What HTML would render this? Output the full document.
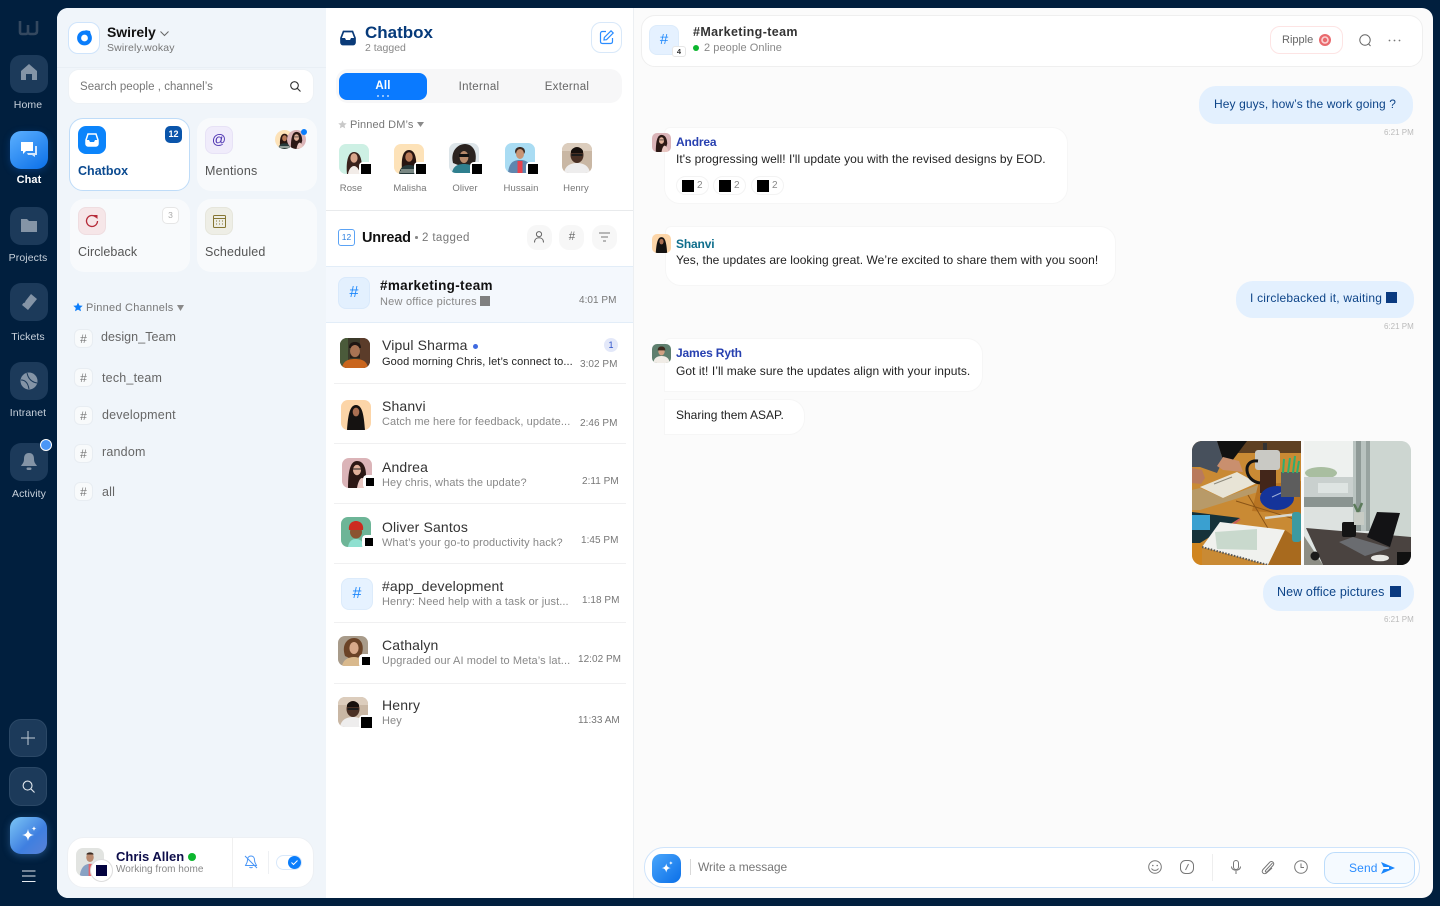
<!DOCTYPE html>
<html><head><meta charset="utf-8"><title>Chatbox</title>
<style>
*{box-sizing:border-box}
html,body{margin:0;padding:0;width:1440px;height:906px;overflow:hidden;background:#011f3e;font-family:"Liberation Sans",sans-serif}
#p{position:absolute;left:0;top:0;width:1440px;height:906px;background:#011f3e}
.a{position:absolute}
.t{position:absolute;line-height:16px;height:16px;white-space:nowrap;letter-spacing:.15px}
.c{transform:translateX(-50%)}
svg{position:absolute;overflow:visible}
.rail{position:absolute;left:10px;width:38px;height:38px;border-radius:11px;background:#1c3a5a}
.rl{color:#c9d2dc;font-size:10.5px;letter-spacing:.1px}
.card{position:absolute;width:121px;height:73px;border-radius:14px;background:#f8fafc}
.ic{position:absolute;width:28px;height:28px;border-radius:8px}
.ch{position:absolute;left:74px;width:19px;height:19px;border-radius:6px;background:#f8fafb;border:1px solid #e8edf2;color:#777;font-size:12px;text-align:center;line-height:18px}
.cn{color:#666;font-size:12.5px;letter-spacing:.2px}
.nm{color:#333;font-size:14px;letter-spacing:.15px}
.sb{color:#888;font-size:11px;letter-spacing:.1px}
.tm{color:#777;font-size:10px;letter-spacing:.03px}
.ln{position:absolute;left:334px;width:292px;height:1px;background:#f0f0f1}
.av{position:absolute;border-radius:7px;overflow:hidden;width:30px;height:30px}
.av svg{left:0;top:0;width:100%;height:100%}
.sq{position:absolute;width:14px;height:14px;background:#fff;border-radius:4px}
.sq i{position:absolute;left:2px;top:2px;width:10px;height:10px;background:#000}
.bub{position:absolute;background:#fff;border-radius:16px;border:1px solid #f6f6f6}
.me{position:absolute;background:#e3f0fe;border-radius:17px}
.mt{color:#0d4488;font-size:12px;letter-spacing:.11px}
.tx{color:#222;font-size:12px;letter-spacing:.06px}
.st{color:#bbb;font-size:8px;letter-spacing:0}
.who{font-size:12px;letter-spacing:-.15px;font-weight:bold}
.rx{position:absolute;top:176px;width:33px;height:19px;border:1px solid #f3f3f3;border-radius:10px;background:#fff}
.rx i{position:absolute;left:5px;top:3px;width:12px;height:12px;background:#000}
.rx b{position:absolute;left:20px;top:2px;font-weight:normal;color:#888;font-size:10px;line-height:14px}
.rb{position:absolute;top:225px;width:25px;height:25px;border-radius:10px;background:#f7f7f7}
.dm{font-size:9.5px;color:#777;letter-spacing:.08px}
</style></head><body>
<svg width="0" height="0" style="position:absolute">
<defs>
<symbol id="rose" viewBox="0 0 30 30"><rect width="30" height="30" fill="#cdf0e4"/><path d="M8 30c-1-9 0-22 7-22s9 10 7 22z" fill="#3a221c"/><ellipse cx="15" cy="14" rx="3.6" ry="4.8" fill="#d9a68c"/><path d="M9 30c1-6 4-8 6-8s5 2 6 8z" fill="#f2ece8"/></symbol>
<symbol id="malisha" viewBox="0 0 30 30"><rect width="30" height="30" fill="#fde2b8"/><path d="M8 26c-1-12 1-20 7-20s8 8 7 20z" fill="#281510"/><ellipse cx="15" cy="13" rx="3.7" ry="4.8" fill="#b97a57"/><path d="M5 30c1-7 5-9 10-9s9 2 10 9z" fill="#26393a"/><path d="M7 26h16M6 28h18" stroke="#cfd8cf"/></symbol>
<symbol id="oliver" viewBox="0 0 30 30"><rect width="30" height="30" fill="#dde5e9"/><path d="M4 20C1 8 9 1 16 1s13 7 10 19l-5 2H9z" fill="#2b2320"/><ellipse cx="15" cy="14" rx="4.4" ry="6" fill="#b98a6b"/><rect x="10" y="11" width="10" height="3" fill="#111"/><path d="M3 30c1-7 6-9 12-9s11 2 12 9z" fill="#2f7f8e"/></symbol>
<symbol id="hussain" viewBox="0 0 30 30"><rect width="30" height="30" fill="#a9dcf3"/><path d="M10 9c0-4 3-5 5-5s5 1 5 5l-1 2h-8z" fill="#3b2a22"/><ellipse cx="15" cy="11" rx="4" ry="5" fill="#c89474"/><path d="M3 30c1-10 5-13 12-13s11 3 12 13z" fill="#5f86ae"/><rect x="12.500" y="18" width="5" height="12" fill="#e8434e"/></symbol>
<symbol id="henry" viewBox="0 0 30 30"><rect width="30" height="30" fill="#c9b7a4"/><rect width="30" height="8" fill="#dccdbd"/><ellipse cx="15" cy="12" rx="6.500" ry="8" fill="#4a3024"/><path d="M9 8c2-5 10-5 12 0v2H9z" fill="#17100d"/><rect x="9.500" y="11" width="11" height="2" fill="#1c1c1c"/><path d="M2 30c1-7 6-10 13-10s12 3 13 10z" fill="#eeeded"/></symbol>
<symbol id="vipul" viewBox="0 0 30 30"><rect width="30" height="30" fill="#3b3a2a"/><rect x="20" width="10" height="30" fill="#5b3c2a"/><rect width="8" height="30" fill="#4a5a3a"/><path d="M9 10c0-5 3-6 6-6s6 1 6 6z" fill="#1e1613"/><ellipse cx="15" cy="13" rx="5" ry="6" fill="#a87353"/><path d="M10 15c2 6 8 6 10 0v5h-10z" fill="#2b1d16"/><path d="M2 30c1-7 6-9 13-9s12 2 13 9z" fill="#c9651d"/></symbol>
<symbol id="shanvi" viewBox="0 0 30 30"><rect width="30" height="30" fill="#fcd5a8"/><path d="M6 30C7 18 8 5 15 5s8 13 9 25z" fill="#151211"/><ellipse cx="15" cy="12" rx="3.300" ry="4.400" fill="#a96f52"/></symbol>
<symbol id="andrea" viewBox="0 0 30 30"><rect width="30" height="30" fill="#dbb4b8"/><path d="M6 30C6 14 8 3 15 3s9 8 9 14l-4 13z" fill="#2c1815"/><ellipse cx="15" cy="12" rx="4" ry="5.200" fill="#e0b09a"/><path d="M15 30c1-6 3-10 5-10s5 4 6 10z" fill="#e9c7c2"/><path d="M11 11h8" stroke="#222"/></symbol>
<symbol id="osantos" viewBox="0 0 30 30"><rect width="30" height="30" fill="#6db597"/><path d="M7 30c1-6 4-8 8-8s7 2 8 8z" fill="#8fe0d0"/><ellipse cx="15" cy="15" rx="6" ry="6.500" fill="#8a5430"/><path d="M8 13c-1-6 3-9 7-9s8 3 7 9z" fill="#cc2b20"/></symbol>
<symbol id="cathalyn" viewBox="0 0 30 30"><rect width="30" height="30" fill="#a89b8a"/><path d="M7 20C3 8 10 2 16 2c8 0 11 9 7 18l-8 4z" fill="#6b4327"/><ellipse cx="16" cy="12" rx="4.600" ry="6" fill="#d8a98a"/><path d="M4 30c1-6 6-9 12-9s9 3 10 9z" fill="#d9b98d"/></symbol>
<symbol id="chris" viewBox="0 0 30 30"><rect width="30" height="30" fill="#e2e4e1"/><ellipse cx="15" cy="10" rx="4" ry="5" fill="#b98a6f"/><path d="M11 7c1-3 7-3 8 0z" fill="#3a2a22"/><path d="M4 30c1-9 5-13 11-13s10 4 11 13z" fill="#88a2c4"/><rect x="13.500" y="17" width="3.500" height="13" fill="#e3656b"/></symbol>
<symbol id="james" viewBox="0 0 30 30"><rect width="30" height="30" fill="#5e7f6e"/><ellipse cx="15" cy="12" rx="5" ry="6" fill="#d2a284"/><path d="M9 10c0-5 3-6 6-6s6 1 6 6z" fill="#3d2a1e"/><path d="M2 30c1-8 6-11 13-11s12 3 13 11z" fill="#f0ece6"/></symbol>
</defs></svg>

<div id="p">
 <!-- main panel -->
 <div class="a" style="left:57px;top:8px;width:1376px;height:890px;border-radius:11px;overflow:hidden;background:#fbfbfb">
  <div class="a" style="left:0;top:0;width:269px;height:890px;background:#f0f5fa"></div>
  <div class="a" style="left:269px;top:0;width:308px;height:890px;background:#fff;border-right:1px solid #eceff2"></div>
  <div class="a" style="left:0;top:59px;width:269px;height:1px;background:#e9eff5"></div>
 </div>

 <!-- rail -->
 <svg style="left:19px;top:20px" width="20" height="15" viewBox="0 0 20 15"><path d="M1 1v11c0 2 1 2 2 2h4c1 0 2-1 2-2V5v7c0 1 1 2 2 2h4c2 0 3-1 3-3V1" fill="none" stroke="#34485f" stroke-width="2.600"/></svg>
 <div class="rail" style="top:55px"></div>
 <svg style="left:20px;top:63px" width="18" height="18" viewBox="0 0 18 18"><path d="M9 1 1 8v9h5v-6h6v6h5V8z" fill="#8494a6"/></svg>
 <div class="t rl c" style="left:28px;top:97px">Home</div>
 <div class="rail" style="top:131px;background:linear-gradient(145deg,#5cb0ff,#0a6fe8);box-shadow:0 2px 8px rgba(20,110,230,.3)"></div>
 <svg style="left:20px;top:141px" width="18" height="18" viewBox="0 0 18 18"><path d="M1 1h12v9H6l-3 3v-3H1z" fill="#fff"/><path d="M15 5h2v9h-2v2l-3-2H8l-1-2h8z" fill="#d5e8fd"/></svg>
 <div class="t c" style="left:29px;top:172px;color:#fff;font-size:11px;font-weight:bold;letter-spacing:.1px">Chat</div>
 <div class="rail" style="top:207px"></div>
 <svg style="left:20px;top:217px" width="18" height="16" viewBox="0 0 18 16"><path d="M1 2h6l2 2h8v11H1z" fill="#8494a6"/></svg>
 <div class="t rl c" style="left:28px;top:250px">Projects</div>
 <div class="rail" style="top:283px"></div>
 <svg style="left:19px;top:292px" width="20" height="20" viewBox="0 0 20 20"><path d="M12 2l6 5-9 11-6-5 1.500-2 1.500-.5.500-1.500z" fill="#8494a6"/></svg>
 <div class="t rl c" style="left:28px;top:329px">Tickets</div>
 <div class="rail" style="top:362px"></div>
 <svg style="left:20px;top:372px" width="18" height="18" viewBox="0 0 18 18"><circle cx="9" cy="9" r="8.500" fill="#8494a6"/><path d="M7 1c1 5 4 9 10 10M1 8c4 0 7 3 8 9" fill="none" stroke="#1c3a5a" stroke-width="1"/></svg>
 <div class="t rl c" style="left:28px;top:405px">Intranet</div>
 <div class="rail" style="top:443px"></div>
 <svg style="left:21px;top:452px" width="16" height="20" viewBox="0 0 16 20"><path d="M8 1c4 0 5 3 5 6 0 4 2 5 3 7H0c1-2 3-3 3-7 0-3 1-6 5-6z" fill="#8494a6"/><rect x="5.500" y="15.500" width="5" height="2.500" rx="1.200" fill="#8494a6"/></svg>
 <div class="a" style="left:40px;top:439px;width:12px;height:12px;border-radius:50%;background:#4a96f6;border:1.500px solid #fff"></div>
 <div class="t rl c" style="left:29px;top:486px">Activity</div>

 <div class="rail" style="left:9px;top:719px;background:#1c3a5a;border:1px solid #2b4866;border-radius:12px"></div>
 <svg style="left:21px;top:731px" width="14" height="14"><path d="M7 0v14M0 7h14" stroke="#c5ced8" stroke-width="1"/></svg>
 <div class="rail" style="left:9px;top:767px;height:39px;background:#1c3a5a;border:1px solid #2b4866;border-radius:12px"></div>
 <svg style="left:22px;top:780px" width="13" height="13" viewBox="0 0 14 14"><circle cx="6" cy="6" r="4.800" fill="none" stroke="#dfe5eb" stroke-width="1.200"/><path d="M9.500 9.500 13.500 13.500" stroke="#dfe5eb" stroke-width="1.200"/></svg>
 <div class="rail" style="left:10px;top:817px;height:37px;width:37px;background:linear-gradient(135deg,#7cc6f6,#3f7fe0 60%,#5a82d6);box-shadow:0 2px 8px rgba(90,160,240,.35)"></div>
 <svg style="left:20px;top:826px" width="18" height="18" viewBox="0 0 18 18"><path d="M8 3c.7 4 2 5.300 6 6-4 .7-5.300 2-6 6-.7-4-2-5.300-6-6 4-.7 5.300-2 6-6z" fill="#fff"/><path d="M14 0c.3 1.700.9 2.300 2.500 2.500C14.900 2.800 14.300 3.400 14 5c-.3-1.600-.9-2.200-2.500-2.500C13.100 2.300 13.700 1.700 14 0z" fill="#fff"/></svg>
 <svg style="left:22px;top:870px" width="14" height="13"><path d="M0 1h13.500M0 6h13.500M0 11.500h13.500" stroke="#e6ebf0" stroke-width="1"/></svg>

 <!-- sidebar head -->
 <div class="a" style="left:68px;top:22px;width:32px;height:32px;background:#fff;border:1px solid #cfe4fb;border-radius:10px"></div>
 <svg style="left:76px;top:29px" width="17" height="17" viewBox="0 0 17 17"><circle cx="8.500" cy="9" r="5.400" fill="none" stroke="#0a7dfb" stroke-width="4"/><path d="M9 1l5 1 1 4z" fill="#0a7dfb"/></svg>
 <div class="t" style="left:107px;top:24px;font-size:14px;font-weight:bold;color:#111;letter-spacing:-.05px">Swirely</div>
 <svg style="left:160px;top:31px" width="9" height="6"><path d="M.5.500 4.500 4.500 8.500.5" fill="none" stroke="#666"/></svg>
 <div class="t" style="left:107px;top:40px;font-size:10.500px;color:#777;letter-spacing:.15px">Swirely.wokay</div>
 <div class="a" style="left:68px;top:69px;width:246px;height:35px;background:#fff;border-radius:11px;border:1px solid #eef2f6"></div>
 <div class="t" style="left:80px;top:79px;font-size:11.500px;color:#777;letter-spacing:.03px">Search people , channel’s</div>
 <svg style="left:290px;top:81px" width="11" height="11" viewBox="0 0 11 11"><circle cx="4.500" cy="4.500" r="3.800" fill="none" stroke="#333" stroke-width="1.100"/><path d="M7.300 7.300 10.500 10.500" stroke="#333" stroke-width="1.100"/></svg>

 <!-- cards -->
 <div class="card" style="left:69px;top:118px;background:#fff;border:1px solid #bfdcf8"></div>
 <div class="ic" style="left:78px;top:126px;background:#0b84fb"></div>
 <svg style="left:85px;top:133px" width="14" height="14" viewBox="0 0 14 14"><path d="M3 1h8l2 6v4c0 1-1 2-2 2H3c-1 0-2-1-2-2V7z" fill="none" stroke="#fff" stroke-width="1.500"/><path d="M1 7h3l1 2h4l1-2h3v4c0 1-1 2-2 2H3c-1 0-2-1-2-2z" fill="#fff"/></svg>
 <div class="t" style="left:78px;top:163px;font-size:12.500px;font-weight:bold;color:#0b4a90;letter-spacing:.02px">Chatbox</div>
 <div class="a" style="left:165px;top:126px;width:17px;height:17px;border-radius:5px;background:#0a55ab;color:#fff;font-size:9px;text-align:center;line-height:17px;font-weight:bold">12</div>

 <div class="card" style="left:197px;top:118px;width:120px"></div>
 <div class="ic" style="left:205px;top:126px;background:#f0ecfb;border:1px solid #e7e2f6"></div>
 <div class="t c" style="left:219px;top:131px;font-size:14px;color:#4a2fb0;letter-spacing:0">@</div>
 <div class="av" style="left:275px;top:130px;width:19px;height:19px;border-radius:50%"><svg viewBox="0 0 30 30"><use href="#malisha"/></svg></div>
 <div class="av" style="left:287px;top:130px;width:19px;height:19px;border-radius:50%"><svg viewBox="0 0 30 30"><use href="#andrea"/></svg></div>
 <div class="a" style="left:301px;top:129px;width:6px;height:6px;border-radius:50%;background:#0a7dfb"></div>
 <div class="t" style="left:205px;top:163px;font-size:12.500px;color:#555;letter-spacing:.22px">Mentions</div>

 <div class="card" style="left:70px;top:199px;width:120px"></div>
 <div class="ic" style="left:78px;top:207px;background:#f6e6e8;border:1px solid #efdde0"></div>
 <svg style="left:85px;top:214px" width="14" height="14" viewBox="0 0 14 14"><path d="M11 3.200A5.500 5.500 0 1 0 12.500 7" fill="none" stroke="#b52a38" stroke-width="1.300"/><path d="M8 1h4.500v4z" fill="#b52a38"/></svg>
 <div class="a" style="left:162px;top:207px;width:17px;height:17px;border-radius:5px;background:#fff;border:1px solid #e6e6e6;color:#aaa;font-size:8.500px;text-align:center;line-height:15px">3</div>
 <div class="t" style="left:78px;top:244px;font-size:12.500px;color:#555;letter-spacing:.08px">Circleback</div>

 <div class="card" style="left:197px;top:199px;width:120px"></div>
 <div class="ic" style="left:205px;top:207px;background:#eeeee6;border:1px solid #e6e6dc"></div>
 <svg style="left:213px;top:215px" width="13" height="13" viewBox="0 0 13 13"><rect x=".5" y=".5" width="12" height="12" rx="1" fill="none" stroke="#857633"/><path d="M.5 3.500h12" stroke="#857633"/><path d="M3 6h1m2 0h1m2 0h1M3 9h1m2 0h1m2 0h1" stroke="#857633"/></svg>
 <div class="t" style="left:205px;top:244px;font-size:12.500px;color:#555;letter-spacing:.16px">Scheduled</div>

 <!-- pinned channels -->
 <svg style="left:73px;top:302px" width="10" height="10" viewBox="0 0 10 10"><path d="M5 .5l1.400 3 3.300.3-2.500 2.200.8 3.300L5 7.600 2 9.300l.8-3.300L.3 3.800l3.300-.3z" fill="#0a7dfb"/></svg>
 <div class="t" style="left:86px;top:300px;font-size:11px;color:#777;letter-spacing:.25px">Pinned Channels</div>
 <svg style="left:177px;top:305px" width="7" height="6"><path d="M0 0h7L3.500 6z" fill="#8a8a8a"/></svg>

 <div class="ch" style="top:329px">#</div><div class="t cn" style="left:101px;top:329px;letter-spacing:.06px">design_Team</div>
 <div class="ch" style="top:368px">#</div><div class="t cn" style="left:102px;top:370px">tech_team</div>
 <div class="ch" style="top:406px">#</div><div class="t cn" style="left:102px;top:407px">development</div>
 <div class="ch" style="top:444px">#</div><div class="t cn" style="left:102px;top:444px">random</div>
 <div class="ch" style="top:482px">#</div><div class="t cn" style="left:102px;top:484px">all</div>

 <!-- user card -->
 <div class="a" style="left:67px;top:837px;width:247px;height:51px;background:#fff;border:1px solid #edf0f4;border-radius:17px"></div>
 <div class="av" style="left:76px;top:848px;width:28px;height:28px"><svg viewBox="0 0 30 30"><use href="#chris"/></svg></div>
 <div class="a" style="left:90px;top:859px;width:23px;height:23px;border-radius:50%;background:#fff;border:1px solid #ddd"></div>
 <div class="a" style="left:96px;top:865px;width:10.500px;height:10.500px;background:#02023f"></div>
 <div class="t" style="left:116px;top:849px;font-size:13px;font-weight:bold;color:#0d0d4a;letter-spacing:0">Chris Allen</div>
 <div class="a" style="left:188px;top:853px;width:8px;height:8px;border-radius:50%;background:#0cb62e"></div>
 <div class="t" style="left:116px;top:862px;font-size:10px;color:#888;letter-spacing:.02px">Working from home</div>
 <div class="a" style="left:232px;top:838px;width:1px;height:50px;background:#f0f0f0"></div>
 <svg style="left:244px;top:855px" width="14" height="14" viewBox="0 0 14 14"><path d="M7 1c2.500 0 3.500 2 3.500 4 0 3 1.500 4 2 5.500H1.500C2 9 3.500 8 3.500 5c0-2 1-4 3.500-4zM5.500 12c.5 1 2.500 1 3 0M1 1l12 12" fill="none" stroke="#4a96f6"/></svg>
 <div class="a" style="left:268px;top:851px;width:1px;height:23px;background:#eef0f3"></div>
 <div class="a" style="left:276px;top:855px;width:26px;height:15px;border-radius:8px;background:#fff;border:1px solid #d8e8fa"></div>
 <div class="a" style="left:288px;top:856px;width:13px;height:13px;border-radius:50%;background:#0a7dfb"></div>
 <svg style="left:291px;top:860px" width="7" height="5"><path d="M.5 2.500 2.500 4.500 6.500.5" fill="none" stroke="#fff"/></svg>

 <!-- middle header -->
 <svg style="left:340px;top:30px" width="16" height="16" viewBox="0 0 16 16"><path d="M3.500 1.500h9L15 8v4.500c0 1.200-1 2-2 2H3c-1 0-2-.8-2-2V8z" fill="none" stroke="#0a3a78" stroke-width="1.700"/><path d="M1 8h4l1 2h4l1-2h4v5c0 1-1 2-2 2H3c-1 0-2-1-2-2z" fill="#0a3a78"/></svg>
 <div class="t" style="left:365px;top:25px;font-size:17px;font-weight:bold;color:#063a7a;letter-spacing:0">Chatbox</div>
 <div class="t" style="left:365px;top:40px;font-size:10.500px;color:#888;letter-spacing:0">2 tagged</div>
 <div class="a" style="left:591px;top:22px;width:31px;height:31px;background:#fff;border:1px solid #d8e8f9;border-radius:10px"></div>
 <svg style="left:599px;top:30px" width="15" height="15" viewBox="0 0 15 15"><path d="M7 1.500H3.500c-1.200 0-2 .8-2 2v8c0 1.200.8 2 2 2h8c1.200 0 2-.8 2-2V8" fill="none" stroke="#2a8cff" stroke-width="1.200"/><path d="M12 .8 14.200 3 7.500 9.700 5 10l.3-2.500z" fill="none" stroke="#2a8cff" stroke-width="1.200"/></svg>

 <div class="a" style="left:336px;top:69px;width:286px;height:34px;background:#f7f7f8;border-radius:12px"></div>
 <div class="a" style="left:339px;top:73px;width:88px;height:27px;background:#0a7aff;border-radius:8px"></div>
 <div class="t c" style="left:383px;top:78px;font-size:11.500px;font-weight:bold;color:#fff">All</div>
 <div class="a" style="left:377px;top:95px;width:2px;height:2px;background:#8cc0ff;box-shadow:5px 0 #8cc0ff,10px 0 #8cc0ff"></div>
 <div class="t c" style="left:479px;top:79px;font-size:11.500px;color:#666;letter-spacing:.3px">Internal</div>
 <div class="t c" style="left:567px;top:79px;font-size:11.500px;color:#666;letter-spacing:.3px">External</div>

 <svg style="left:338px;top:120px" width="9" height="9" viewBox="0 0 10 10"><path d="M5 .5l1.400 3 3.300.3-2.500 2.200.8 3.300L5 7.600 2 9.300l.8-3.300L.3 3.800l3.300-.3z" fill="#c9c9c9"/></svg>
 <div class="t" style="left:350px;top:117px;font-size:11px;color:#777;letter-spacing:.12px">Pinned DM’s</div>
 <svg style="left:417px;top:122px" width="7" height="5"><path d="M0 0h7L3.500 5z" fill="#8a8a8a"/></svg>

 <div class="av" style="left:339px;top:144px"><svg viewBox="0 0 30 30"><use href="#rose"/></svg></div>
 <div class="av" style="left:394px;top:144px"><svg viewBox="0 0 30 30"><use href="#malisha"/></svg></div>
 <div class="av" style="left:449px;top:143px"><svg viewBox="0 0 30 30"><use href="#oliver"/></svg></div>
 <div class="av" style="left:505px;top:143px"><svg viewBox="0 0 30 30"><use href="#hussain"/></svg></div>
 <div class="av" style="left:562px;top:143px"><svg viewBox="0 0 30 30"><use href="#henry"/></svg></div>
 <div class="sq" style="left:359px;top:162px"><i></i></div>
 <div class="sq" style="left:414px;top:162px"><i></i></div>
 <div class="sq" style="left:470px;top:162px"><i></i></div>
 <div class="sq" style="left:526px;top:162px"><i></i></div>
 <div class="t c dm" style="left:351px;top:181px">Rose</div>
 <div class="t c dm" style="left:410px;top:181px">Malisha</div>
 <div class="t c dm" style="left:465px;top:181px">Oliver</div>
 <div class="t c dm" style="left:521px;top:181px">Hussain</div>
 <div class="t c dm" style="left:576px;top:181px">Henry</div>

 <div class="a" style="left:326px;top:210px;width:307px;height:1px;background:#e8eaec"></div>
 <div class="a" style="left:338px;top:229px;width:17px;height:17px;border:1px solid #5ba3f5;border-radius:3px;color:#2a7fe0;font-size:8.500px;text-align:center;line-height:15px;letter-spacing:0">12</div>
 <div class="t" style="left:362px;top:230px;font-size:14.500px;font-weight:bold;color:#111;letter-spacing:-.2px">Unread</div>
 <div class="a" style="left:415px;top:236px;width:2.500px;height:2.500px;border-radius:50%;background:#888"></div>
 <div class="t" style="left:422px;top:230px;font-size:11.500px;color:#777;letter-spacing:.38px">2 tagged</div>
 <div class="rb" style="left:527px"></div><div class="rb" style="left:559px"></div><div class="rb" style="left:592px"></div>
 <svg style="left:534px;top:231px" width="10" height="12" viewBox="0 0 10 12"><circle cx="5" cy="3.200" r="2.600" fill="none" stroke="#666"/><path d="M.5 11.500c0-3.200 2-4.700 4.500-4.700s4.500 1.500 4.500 4.700" fill="none" stroke="#666"/></svg>
 <div class="t c" style="left:572px;top:229px;font-size:11.500px;color:#666;letter-spacing:0">#</div>
 <svg style="left:599px;top:232px" width="11" height="10"><path d="M0 1h11M2 5h7M4 9h3" stroke="#777"/></svg>

 <!-- list -->
 <div class="a" style="left:326px;top:266px;width:307px;height:57px;background:#f4f8fd;border-top:1px solid #e2edf8;border-bottom:1px solid #e2edf8"></div>
 <div class="a" style="left:338px;top:277px;width:32px;height:32px;background:#e3f0fe;border:1px solid #d9e9fb;border-radius:8px;color:#1b86fb;font-size:16px;text-align:center;line-height:30px">#</div>
 <div class="t" style="left:380px;top:278px;font-size:13.500px;font-weight:bold;color:#111;letter-spacing:.32px">#marketing-team</div>
 <div class="t sb" style="left:380px;top:294px;letter-spacing:.22px">New office pictures</div>
 <div class="a" style="left:480px;top:296px;width:10px;height:10px;background:#808080"></div>
 <div class="t tm" style="left:579px;top:293px">4:01 PM</div>

 <div class="av" style="left:340px;top:338px"><svg viewBox="0 0 30 30"><use href="#vipul"/></svg></div>
 <div class="t nm" style="left:382px;top:337px">Vipul Sharma</div>
 <div class="a" style="left:473px;top:343.500px;width:5px;height:5px;border-radius:50%;background:#3f6ae0"></div>
 <div class="a" style="left:604px;top:338px;width:14px;height:14px;border-radius:50%;background:#e3e8f9;color:#2e52c9;font-size:9px;text-align:center;line-height:14px">1</div>
 <div class="t sb" style="left:382px;top:354px;color:#222">Good morning Chris, let’s connect to...</div>
 <div class="t tm" style="left:580px;top:357px">3:02 PM</div>
 <div class="ln" style="top:383px"></div>

 <div class="av" style="left:341px;top:400px"><svg viewBox="0 0 30 30"><use href="#shanvi"/></svg></div>
 <div class="t nm" style="left:382px;top:398px">Shanvi</div>
 <div class="t sb" style="left:382px;top:414px">Catch me here for feedback, update...</div>
 <div class="t tm" style="left:580px;top:416px">2:46 PM</div>
 <div class="ln" style="top:443px"></div>

 <div class="av" style="left:342px;top:458px"><svg viewBox="0 0 30 30"><use href="#andrea"/></svg></div>
 <div class="sq" style="left:363px;top:475px"><i style="left:3px;top:3px;width:8px;height:8px"></i></div>
 <div class="t nm" style="left:382px;top:459px">Andrea</div>
 <div class="t sb" style="left:382px;top:475px">Hey chris, whats the update?</div>
 <div class="t tm" style="left:582px;top:474px">2:11 PM</div>
 <div class="ln" style="top:503px"></div>

 <div class="av" style="left:341px;top:517px"><svg viewBox="0 0 30 30"><use href="#osantos"/></svg></div>
 <div class="sq" style="left:362px;top:535px"><i style="left:3px;top:3px;width:8px;height:8px"></i></div>
 <div class="t nm" style="left:382px;top:519px">Oliver Santos</div>
 <div class="t sb" style="left:382px;top:535px">What’s your go-to productivity hack?</div>
 <div class="t tm" style="left:581px;top:533px">1:45 PM</div>
 <div class="ln" style="top:563px"></div>

 <div class="a" style="left:341px;top:578px;width:32px;height:32px;background:#e6f2ff;border:1px solid #dcebfb;border-radius:8px;color:#1b86fb;font-size:16px;text-align:center;line-height:30px">#</div>
 <div class="t nm" style="left:382px;top:578px">#app_development</div>
 <div class="t sb" style="left:382px;top:594px">Henry: Need help with a task or just...</div>
 <div class="t tm" style="left:582px;top:593px">1:18 PM</div>
 <div class="ln" style="top:622px"></div>

 <div class="av" style="left:338px;top:636px"><svg viewBox="0 0 30 30"><use href="#cathalyn"/></svg></div>
 <div class="sq" style="left:359px;top:654px"><i style="left:3px;top:3px;width:8px;height:8px"></i></div>
 <div class="t nm" style="left:382px;top:637px">Cathalyn</div>
 <div class="t sb" style="left:382px;top:653px">Upgraded our AI model to Meta’s lat...</div>
 <div class="t tm" style="left:578px;top:652px">12:02 PM</div>
 <div class="ln" style="top:683px"></div>

 <div class="av" style="left:338px;top:697px"><svg viewBox="0 0 30 30"><use href="#henry"/></svg></div>
 <div class="sq" style="left:359px;top:715px"><i style="left:1.500px;top:1.500px;width:11px;height:11px"></i></div>
 <div class="t nm" style="left:382px;top:697px">Henry</div>
 <div class="t sb" style="left:382px;top:713px">Hey</div>
 <div class="t tm" style="left:578px;top:713px">11:33 AM</div>

 <!-- chat header -->
 <div class="a" style="left:641px;top:15px;width:782px;height:52px;background:#fff;border:1px solid #efefef;border-radius:14px"></div>
 <div class="a" style="left:649px;top:25px;width:30px;height:30px;background:#e5f1ff;border:1px solid #dcebfb;border-radius:8px;color:#1b86fb;font-size:15px;text-align:center;line-height:28px">#</div>
 <div class="a" style="left:672px;top:46px;width:14px;height:11px;background:#fff;border:1px solid #e6e6e6;border-radius:3px;color:#333;font-size:7.500px;text-align:center;line-height:10px;font-weight:bold">4</div>
 <div class="t" style="left:693px;top:24px;font-size:12.500px;font-weight:bold;color:#333;letter-spacing:.37px">#Marketing-team</div>
 <div class="a" style="left:693px;top:44.500px;width:6px;height:6px;border-radius:50%;background:#0cb62e"></div>
 <div class="t" style="left:704px;top:40px;font-size:11px;color:#888;letter-spacing:.06px">2 people Online</div>
 <div class="a" style="left:1270px;top:26px;width:73px;height:28px;background:#fff;border:1px solid #fde4e4;border-radius:10px"></div>
 <div class="t" style="left:1282px;top:32px;font-size:11px;color:#666;letter-spacing:0">Ripple</div>
 <svg style="left:1319px;top:34px" width="12" height="12" viewBox="0 0 12 12"><circle cx="6" cy="6" r="6" fill="#e96a6e"/><circle cx="6" cy="6" r="3.800" fill="#fbd3d3"/><circle cx="6" cy="6" r="2.200" fill="#e96a6e"/></svg>
 <svg style="left:1359px;top:34px" width="13" height="13" viewBox="0 0 13 13"><circle cx="6" cy="6" r="5.200" fill="none" stroke="#666" stroke-width="1"/><path d="M9.500 9.800 11.500 12" stroke="#666"/></svg>
 <svg style="left:1388px;top:39px" width="13" height="3"><circle cx="1.500" cy="1.500" r=".9" fill="#777"/><circle cx="6.500" cy="1.500" r=".9" fill="#777"/><circle cx="11.500" cy="1.500" r=".9" fill="#777"/></svg>

 <!-- messages -->
 <div class="me" style="left:1199px;top:86px;width:214px;height:38px"></div>
 <div class="t mt" style="left:1214px;top:96px">Hey guys, how’s the work going ?</div>
 <div class="t st" style="left:1384px;top:125px">6:21 PM</div>

 <div class="bub" style="left:664px;top:127px;width:404px;height:77px;border-top-left-radius:6px"></div>
 <div class="av" style="left:652px;top:133px;width:19px;height:19px;border-radius:5px"><svg viewBox="0 0 30 30"><use href="#andrea"/></svg></div>
 <div class="t who" style="left:676px;top:134px;color:#2740b0">Andrea</div>
 <div class="t tx" style="left:676px;top:151px">It's progressing well! I'll update you with the revised designs by EOD.</div>
 <div class="rx" style="left:676px"><i></i><b>2</b></div>
 <div class="rx" style="left:713px"><i></i><b>2</b></div>
 <div class="rx" style="left:751px"><i></i><b>2</b></div>

 <div class="bub" style="left:665px;top:226px;width:451px;height:60px;border-top-left-radius:6px"></div>
 <div class="av" style="left:652px;top:234px;width:19px;height:19px;border-radius:5px"><svg viewBox="0 0 30 30"><use href="#shanvi"/></svg></div>
 <div class="t who" style="left:676px;top:236px;color:#0f6e8c">Shanvi</div>
 <div class="t tx" style="left:676px;top:252px">Yes, the updates are looking great. We’re excited to share them with you soon!</div>

 <div class="me" style="left:1236px;top:281px;width:178px;height:37px"></div>
 <div class="t mt" style="left:1250px;top:290px;letter-spacing:.21px">I circlebacked it, waiting</div>
 <div class="a" style="left:1386px;top:292px;width:11px;height:11px;background:#0a3a80"></div>
 <div class="t st" style="left:1384px;top:319px">6:21 PM</div>

 <div class="bub" style="left:664px;top:338px;width:319px;height:54px;border-top-left-radius:6px;border-bottom-left-radius:0"></div>
 <div class="av" style="left:652px;top:344px;width:19px;height:19px;border-radius:5px"><svg viewBox="0 0 30 30"><use href="#james"/></svg></div>
 <div class="t who" style="left:676px;top:345px;color:#2740b0">James Ryth</div>
 <div class="t tx" style="left:676px;top:363px">Got it! I’ll make sure the updates align with your inputs.</div>
 <div class="bub" style="left:664px;top:399px;width:141px;height:36px;border-top-left-radius:0;border-bottom-left-radius:0"></div>
 <div class="t tx" style="left:676px;top:407px;letter-spacing:0">Sharing them ASAP.</div>

 <!-- photos -->
 <svg style="left:1192px;top:441px;border-radius:10px 0 0 10px;overflow:hidden" width="109" height="124" viewBox="0 0 109 124">
  <rect width="109" height="124" fill="#c98a34"/>
  <rect width="109" height="12" fill="#5e4022"/><path d="M25 0h30L40 20 31 19z" fill="#111"/>
  <path d="M0 0h25l6 19-6 13-17-6H0z" fill="#47505c"/>
  <path d="M31 16l16 4 4 11-20-2-6-4z" fill="#c98f6e"/><path d="M0 27l10 2 3 8-4 6-9-1z" fill="#b97a5c"/>
  <path d="M0 49l8-2 23 10 35-13v7L8 69H0z" fill="#b89a68"/>
  <path d="M8 46 45 31l20 11-34 15z" fill="#e8e4d6"/><path d="M22 43l18-7" stroke="#8d8a7c"/>
  <path d="M66 44 109 40v34L60 70z" fill="#b87422"/><path d="M44 60l65 20M56 54l30 50" stroke="#8a5416" stroke-width="1"/>
  <path d="M0 71 48 77 8 102H0z" fill="#16323a"/><rect y="74" width="18" height="15" fill="#3aa0d0"/><path d="M16 102 48 78" stroke="#c65a5a" stroke-width="2"/>
  <path d="M28 81 93 89 76 124 10 106z" fill="#f0f1ee"/><path d="M23 91l42-3 0 21-40-1z" fill="#bcd0c2" opacity=".75"/>
  <path d="M10 106l66 18" stroke="#555" stroke-width="2" stroke-dasharray="1.500 1.500"/>
  <path d="M93 89 109 100v24H76z" fill="#a86a1e"/><path d="M0 102h10l0 22H0z" fill="#d0851f"/>
  <rect x="63" y="9" width="25" height="20" rx="3" fill="#c9c9c4"/><rect x="68" y="29" width="16" height="23" fill="#43261a" /><rect x="71" y="2" width="4" height="7" fill="#333"/>
  <path d="M66 20C50 18 52 40 68 42" fill="none" stroke="#141414" stroke-width="3"/>
  <ellipse cx="85" cy="57" rx="17" ry="12" fill="#15349a"/><path d="M80 56l22-10" stroke="#9fb0d8"/>
  <rect x="89" y="31" width="19" height="25" fill="#5d5d5d"/><path d="M91 32l1-14m4 14 2-15m3 15 2-17m2 17 2-12" stroke="#2fae6f" stroke-width="2"/>
  <path d="M73 77 106 73" stroke="#d8d8d0" stroke-width="2.500"/><rect x="100" y="71" width="9" height="30" rx="3" fill="#3d9aa0"/>
 </svg>
 <svg style="left:1304px;top:441px;border-radius:0 10px 10px 0;overflow:hidden" width="107" height="124" viewBox="0 0 107 124">
  <rect width="107" height="124" fill="#dfe5e3"/>
  <rect width="49" height="36" fill="#eef1ef"/><ellipse cx="17" cy="32" rx="16" ry="6" fill="#a9bea0"/>
  <rect y="36" width="49" height="41" fill="#c9d0ce"/><rect x="14" y="42" width="30" height="10" fill="#dee4e2"/>
  <rect y="56" width="49" height="10" fill="#8a9491"/><rect y="66" width="49" height="24" fill="#dde2e0"/>
  <rect x="49" width="17" height="90" fill="#b9c3c0"/><rect x="52" width="5" height="90" fill="#8f9a97"/><rect x="62" width="4" height="90" fill="#98a3a0"/><rect x="66" width="41" height="96" fill="#cdd6d1"/>
  <path d="M2 87 107 96v28H19z" fill="#4a4340"/><path d="M0 95 19 124H0z" fill="#8d8d84"/>
  <rect x="38" y="81" width="14" height="15" rx="2" fill="#141414"/><rect x="50" y="71" width="10" height="13" fill="#c8ccc5"/><path d="M54 71l-4-8m4 8 4-9" stroke="#5b7a5a" stroke-width="2.500"/>
  <path d="M63 96 73 71l23 1-10 34z" fill="#131315"/><path d="M35 101 49 96 86 107 61 115z" fill="#6a6c70"/>
  <ellipse cx="76" cy="117" rx="9" ry="3.300" fill="#e8e8e4"/><rect x="93" y="111" width="14" height="13" fill="#111"/><circle cx="11" cy="115" r="4.500" fill="#1a1a1a"/>
 </svg>

 <div class="me" style="left:1263px;top:575px;width:151px;height:36px"></div>
 <div class="t mt" style="left:1277px;top:584px;font-size:12.500px;letter-spacing:.11px">New office pictures</div>
 <div class="a" style="left:1390px;top:586px;width:11px;height:11px;background:#0a3a80"></div>
 <div class="t st" style="left:1384px;top:612px">6:21 PM</div>

 <!-- input -->
 <div class="a" style="left:644px;top:847px;width:776px;height:41px;background:#fff;border:1px solid #cfe4fb;border-radius:20px"></div>
 <div class="a" style="left:652px;top:854px;width:29px;height:29px;background:linear-gradient(135deg,#4aa6fb,#0a6fe8);border-radius:9px"></div>
 <svg style="left:660px;top:861px" width="14" height="14" viewBox="0 0 18 18"><path d="M8 3c.7 4 2 5.300 6 6-4 .7-5.300 2-6 6-.7-4-2-5.300-6-6 4-.7 5.300-2 6-6z" fill="#fff"/><path d="M14 0c.3 1.700.9 2.300 2.500 2.500C14.900 2.800 14.300 3.400 14 5c-.3-1.600-.9-2.200-2.500-2.500C13.100 2.300 13.700 1.700 14 0z" fill="#fff"/></svg>
 <div class="a" style="left:690px;top:859px;width:1px;height:16px;background:#d9d9d9"></div>
 <div class="t" style="left:698px;top:859px;font-size:12px;color:#777;letter-spacing:-.05px">Write a message</div>

 <svg style="left:1148px;top:860px" width="14" height="14" viewBox="0 0 14 14"><circle cx="7" cy="7" r="6.300" fill="none" stroke="#777"/><circle cx="4.800" cy="5.500" r=".8" fill="#777"/><circle cx="9.200" cy="5.500" r=".8" fill="#777"/><path d="M3.500 8.500c1.500 2.500 5.500 2.500 7 0" fill="none" stroke="#777"/></svg>
 <svg style="left:1180px;top:860px" width="14" height="14" viewBox="0 0 14 14"><rect x=".5" y=".5" width="13" height="13" rx="5" fill="none" stroke="#777"/><path d="M5.500 10 8.500 4" stroke="#777"/></svg>
 <div class="a" style="left:1212px;top:854px;width:1px;height:27px;background:#eee"></div>
 <svg style="left:1231px;top:860px" width="10" height="14" viewBox="0 0 10 14"><rect x="2.500" y=".5" width="5" height="9" rx="2.500" fill="none" stroke="#777"/><path d="M.5 6.500c0 5 9 5 9 0M5 11v3" fill="none" stroke="#777"/></svg>
 <svg style="left:1261px;top:860px" width="13" height="14" viewBox="0 0 13 14"><path d="M11.500 3 5 10c-1.500 1.500 0 3 1.500 1.500L12 5.500c2-2.500-1-5.500-3.500-3L2 9.500c-2.500 3 1.500 5.800 4 3L11 8" fill="none" stroke="#777"/></svg>
 <svg style="left:1294px;top:860px" width="14" height="14" viewBox="0 0 14 14"><circle cx="7" cy="7" r="6.300" fill="none" stroke="#777"/><path d="M7 3.500V7.500H10" fill="none" stroke="#777"/></svg>
 <div class="a" style="left:1324px;top:852px;width:91px;height:32px;background:#f5faff;border:1px solid #bcdcfb;border-radius:11px"></div>
 <div class="t" style="left:1349px;top:860px;font-size:12px;color:#2a8cff;letter-spacing:.15px">Send</div>
 <svg style="left:1381px;top:862px" width="14" height="12" viewBox="0 0 14 12"><path d="M0 0 14 6 0 12l2.500-5H8V5H2.500z" fill="#1b86fb"/></svg>
</div>
</body></html>
